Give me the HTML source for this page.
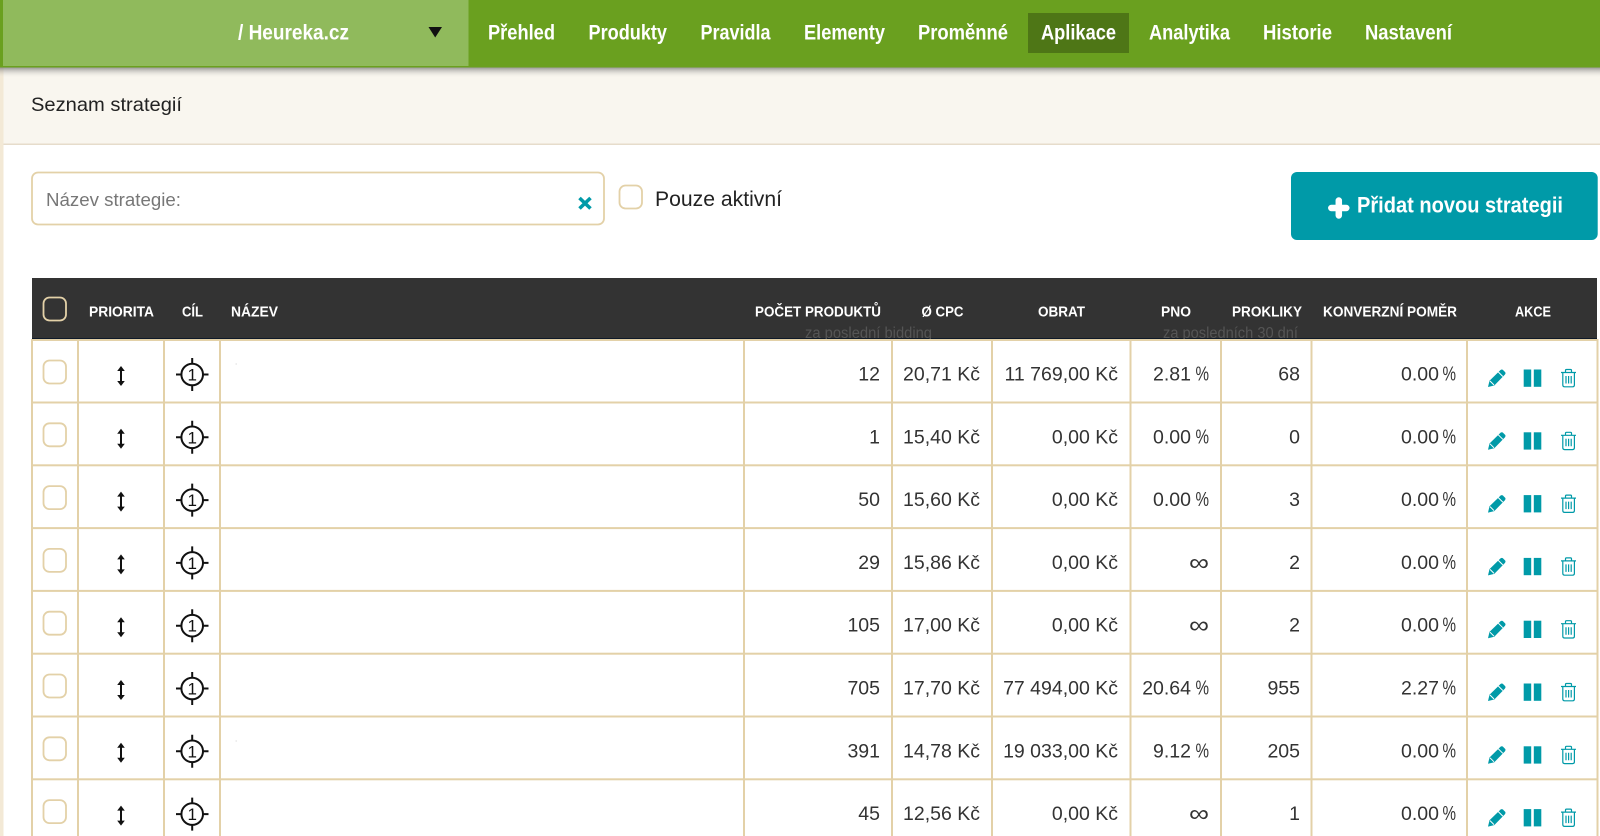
<!DOCTYPE html>
<html lang="cs">
<head>
<meta charset="utf-8">
<title>Seznam strategií</title>
<style>
html,body{margin:0;padding:0;width:1600px;height:836px;overflow:hidden;background:#fff}
svg{display:block}
text{font-family:"Liberation Sans",sans-serif}
.nav{font-size:21px;font-weight:700;fill:#fff}
.th{font-size:14.5px;font-weight:700;fill:#fff}
.sub{font-size:15.5px;fill:#555}
.n{font-size:19.5px;fill:#333;text-anchor:end}
.p{font-size:20.5px;fill:#333}
.one{font-size:17px;fill:#111;text-anchor:middle}
.inf{font-size:24px;fill:#333}
</style>
</head>
<body>
<svg xmlns="http://www.w3.org/2000/svg" width="1600" height="836" viewBox="0 0 1600 836">
<defs>
<linearGradient id="sh" x1="0" y1="0" x2="0" y2="1">
<stop offset="0" stop-color="#6e6e6e" stop-opacity=".75"/>
<stop offset="1" stop-color="#f9f6ef" stop-opacity="0"/>
</linearGradient>
<g id="rowi">
<rect x="43.500" y="21" width="22.500" height="23" rx="6" fill="#fff" stroke="#e3d1a8" stroke-width="1.800"/>
<path d="M121 29v15" stroke="#111" stroke-width="2" fill="none"/>
<path d="M117.200 31.500L121 26.500l3.800 5zM117.200 41.500L121 46.500l3.800-5z" fill="#111"/>
<circle cx="192.200" cy="35" r="10.800" fill="none" stroke="#111" stroke-width="2"/>
<path d="M192.200 18.500v5.500M192.200 46v5.500M176 35h5.500M203 35h5.500" stroke="#111" stroke-width="2" fill="none"/>
<path d="M1488 47.500l1.500-6.300L1500.500 30.500q1.500-1 2.500 0l2 2q1 1 0 2.500L1494.300 46z" fill="#009aa8"/>
<path d="M1498.300 32.500l4.500 4.500M1490 41.500l4 4" stroke="#fff" stroke-width="1" fill="none"/>
<rect x="1523.700" y="30" width="7.500" height="17.300" fill="#009aa8"/>
<rect x="1533.800" y="30" width="7.500" height="17.300" fill="#009aa8"/>
<g fill="none" stroke="#009aa8" stroke-width="1.200">
<path d="M1561 33h15M1565.500 33v-2q0-1 1-1h4q1 0 1 1v2"/>
<path d="M1562.800 33v12.500q0 1.800 1.800 1.800h8q1.800 0 1.800-1.800V33"/>
<path d="M1566 36.500v7.500M1568.600 36.500v7.500M1571.200 36.500v7.500"/>
</g>
</g>
</defs>

<!-- page -->
<rect width="1600" height="836" fill="#fff"/>
<rect x="0" y="67" width="3.500" height="769" fill="#f3e9d6"/>
<rect x="3.500" y="67" width="1596.500" height="77" fill="#f9f6ef"/>
<rect x="3.500" y="143.500" width="1596.500" height="1.500" fill="#e6dccb"/>
<rect x="0" y="67" width="1600" height="11" fill="url(#sh)"/>

<!-- top nav -->
<rect width="1600" height="67.500" fill="#6aa01f"/>
<rect x="3" y="0" width="465.500" height="66" fill="#90ba5c"/>
<rect x="1028" y="13" width="101" height="40" fill="#4e7616"/>
<text class="nav" x="238" y="39.500" textLength="111" lengthAdjust="spacingAndGlyphs">/ Heureka.cz</text>
<path d="M428.500 27H442L435.200 37.500z" fill="#111"/>
<text class="nav" x="488" y="39.500" textLength="67" lengthAdjust="spacingAndGlyphs">Přehled</text>
<text class="nav" x="588.500" y="39.500" textLength="78.500" lengthAdjust="spacingAndGlyphs">Produkty</text>
<text class="nav" x="700.500" y="39.500" textLength="70" lengthAdjust="spacingAndGlyphs">Pravidla</text>
<text class="nav" x="804" y="39.500" textLength="81" lengthAdjust="spacingAndGlyphs">Elementy</text>
<text class="nav" x="918" y="39.500" textLength="90" lengthAdjust="spacingAndGlyphs">Proměnné</text>
<text class="nav" x="1041" y="39.500" textLength="75" lengthAdjust="spacingAndGlyphs">Aplikace</text>
<text class="nav" x="1149" y="39.500" textLength="81" lengthAdjust="spacingAndGlyphs">Analytika</text>
<text class="nav" x="1263" y="39.500" textLength="69" lengthAdjust="spacingAndGlyphs">Historie</text>
<text class="nav" x="1365" y="39.500" textLength="87" lengthAdjust="spacingAndGlyphs">Nastavení</text>

<!-- sub header -->
<text x="31" y="111" font-size="19.500" fill="#222" textLength="151" lengthAdjust="spacingAndGlyphs">Seznam strategií</text>

<!-- filter row -->
<rect x="32" y="172.500" width="572" height="52" rx="6" fill="#fff" stroke="#e3d1a8" stroke-width="1.800"/>
<text x="46" y="206" font-size="18.500" fill="#777" textLength="135" lengthAdjust="spacingAndGlyphs">Název strategie:</text>
<path d="M579.500 198L590.500 208.500M590.500 198L579.500 208.500" stroke="#009aa8" stroke-width="3.600" fill="none"/>
<rect x="619.500" y="185.500" width="22.500" height="23" rx="6" fill="#fff" stroke="#e3d1a8" stroke-width="1.800"/>
<text x="655" y="206" font-size="21" fill="#222" textLength="127" lengthAdjust="spacingAndGlyphs">Pouze aktivní</text>

<rect x="1291" y="172" width="306.700" height="68" rx="6" fill="#009aa8"/>
<path d="M1338.800 200.500v15M1331.300 208h15" stroke="#fff" stroke-width="6.500" stroke-linecap="round" fill="none"/>
<text x="1357" y="212.700" font-size="22" font-weight="700" fill="#fff" textLength="206" lengthAdjust="spacingAndGlyphs">Přidat novou strategii</text>

<!-- table header -->
<rect x="32" y="278" width="1565" height="61" fill="#333"/>
<rect x="32" y="338" width="1565" height="1" fill="#0e1a2a"/>
<rect x="43.500" y="297.500" width="22.500" height="23" rx="6" fill="#333" stroke="#e3d1a8" stroke-width="1.800"/>
<text class="th" x="89" y="316.700" textLength="65" lengthAdjust="spacingAndGlyphs">PRIORITA</text>
<text class="th" x="182" y="316.700" textLength="21" lengthAdjust="spacingAndGlyphs">CÍL</text>
<text class="th" x="231" y="316.700" textLength="47" lengthAdjust="spacingAndGlyphs">NÁZEV</text>
<text class="th" x="755" y="316.700" textLength="126" lengthAdjust="spacingAndGlyphs">POČET PRODUKTŮ</text>
<text class="th" x="921.500" y="316.700" textLength="42" lengthAdjust="spacingAndGlyphs">Ø CPC</text>
<text class="th" x="1038" y="316.700" textLength="47" lengthAdjust="spacingAndGlyphs">OBRAT</text>
<text class="th" x="1161" y="316.700" textLength="30" lengthAdjust="spacingAndGlyphs">PNO</text>
<text class="th" x="1232" y="316.700" textLength="70" lengthAdjust="spacingAndGlyphs">PROKLIKY</text>
<text class="th" x="1323" y="316.700" textLength="134" lengthAdjust="spacingAndGlyphs">KONVERZNÍ POMĚR</text>
<text class="th" x="1515" y="316.700" textLength="36" lengthAdjust="spacingAndGlyphs">AKCE</text>
<text class="sub" x="805" y="338" textLength="127" lengthAdjust="spacingAndGlyphs">za poslední bidding</text>
<text class="sub" x="1163" y="338" textLength="135" lengthAdjust="spacingAndGlyphs">za posledních 30 dní</text>

<!-- table body background -->
<rect x="32" y="339" width="1565" height="497" fill="#fff"/>

<!-- grid -->
<g fill="#e3d1a8">
<rect x="31" y="339" width="2" height="497"/>
<rect x="77" y="339" width="2" height="497"/>
<rect x="163" y="339" width="2" height="497"/>
<rect x="219" y="339" width="2" height="497"/>
<rect x="743" y="339" width="2" height="497"/>
<rect x="891" y="339" width="2" height="497"/>
<rect x="991" y="339" width="2" height="497"/>
<rect x="1129.500" y="339" width="2" height="497"/>
<rect x="1220" y="339" width="2" height="497"/>
<rect x="1310.500" y="339" width="2" height="497"/>
<rect x="1466" y="339" width="2" height="497"/>
<rect x="1596.500" y="339" width="2" height="497"/>
<rect x="31" y="339" width="1567" height="2"/>
<rect x="31" y="401.500" width="1567" height="2"/>
<rect x="31" y="464.300" width="1567" height="2"/>
<rect x="31" y="527.100" width="1567" height="2"/>
<rect x="31" y="589.900" width="1567" height="2"/>
<rect x="31" y="652.700" width="1567" height="2"/>
<rect x="31" y="715.500" width="1567" height="2"/>
<rect x="31" y="778.300" width="1567" height="2"/>
</g>
<rect x="235.500" y="363.500" width="1.500" height="1" fill="#ddd"/>
<rect x="235.500" y="740.500" width="1.500" height="1" fill="#ddd"/>

<!-- rows -->
<g transform="translate(0,339.500)">
<use href="#rowi"/><text class="one" x="192.200" y="41">1</text>
<text class="n" x="880" y="41">12</text><text class="n" x="980" y="41">20,71 Kč</text><text class="n" x="1118" y="41">11 769,00 Kč</text>
<text class="n" x="1191" y="41">2.81</text><text class="p" x="1195.500" y="41" textLength="13.500" lengthAdjust="spacingAndGlyphs">%</text>
<text class="n" x="1300" y="41">68</text>
<text class="n" x="1439" y="41">0.00</text><text class="p" x="1442.500" y="41" textLength="13.500" lengthAdjust="spacingAndGlyphs">%</text>
</g>
<g transform="translate(0,402.300)">
<use href="#rowi"/><text class="one" x="192.200" y="41">1</text>
<text class="n" x="880" y="41">1</text><text class="n" x="980" y="41">15,40 Kč</text><text class="n" x="1118" y="41">0,00 Kč</text>
<text class="n" x="1191" y="41">0.00</text><text class="p" x="1195.500" y="41" textLength="13.500" lengthAdjust="spacingAndGlyphs">%</text>
<text class="n" x="1300" y="41">0</text>
<text class="n" x="1439" y="41">0.00</text><text class="p" x="1442.500" y="41" textLength="13.500" lengthAdjust="spacingAndGlyphs">%</text>
</g>
<g transform="translate(0,465.100)">
<use href="#rowi"/><text class="one" x="192.200" y="41">1</text>
<text class="n" x="880" y="41">50</text><text class="n" x="980" y="41">15,60 Kč</text><text class="n" x="1118" y="41">0,00 Kč</text>
<text class="n" x="1191" y="41">0.00</text><text class="p" x="1195.500" y="41" textLength="13.500" lengthAdjust="spacingAndGlyphs">%</text>
<text class="n" x="1300" y="41">3</text>
<text class="n" x="1439" y="41">0.00</text><text class="p" x="1442.500" y="41" textLength="13.500" lengthAdjust="spacingAndGlyphs">%</text>
</g>
<g transform="translate(0,527.900)">
<use href="#rowi"/><text class="one" x="192.200" y="41">1</text>
<text class="n" x="880" y="41">29</text><text class="n" x="980" y="41">15,86 Kč</text><text class="n" x="1118" y="41">0,00 Kč</text>
<text class="inf" x="1189" y="42.500" textLength="20" lengthAdjust="spacingAndGlyphs">∞</text>
<text class="n" x="1300" y="41">2</text>
<text class="n" x="1439" y="41">0.00</text><text class="p" x="1442.500" y="41" textLength="13.500" lengthAdjust="spacingAndGlyphs">%</text>
</g>
<g transform="translate(0,590.700)">
<use href="#rowi"/><text class="one" x="192.200" y="41">1</text>
<text class="n" x="880" y="41">105</text><text class="n" x="980" y="41">17,00 Kč</text><text class="n" x="1118" y="41">0,00 Kč</text>
<text class="inf" x="1189" y="42.500" textLength="20" lengthAdjust="spacingAndGlyphs">∞</text>
<text class="n" x="1300" y="41">2</text>
<text class="n" x="1439" y="41">0.00</text><text class="p" x="1442.500" y="41" textLength="13.500" lengthAdjust="spacingAndGlyphs">%</text>
</g>
<g transform="translate(0,653.500)">
<use href="#rowi"/><text class="one" x="192.200" y="41">1</text>
<text class="n" x="880" y="41">705</text><text class="n" x="980" y="41">17,70 Kč</text><text class="n" x="1118" y="41">77 494,00 Kč</text>
<text class="n" x="1191" y="41">20.64</text><text class="p" x="1195.500" y="41" textLength="13.500" lengthAdjust="spacingAndGlyphs">%</text>
<text class="n" x="1300" y="41">955</text>
<text class="n" x="1439" y="41">2.27</text><text class="p" x="1442.500" y="41" textLength="13.500" lengthAdjust="spacingAndGlyphs">%</text>
</g>
<g transform="translate(0,716.300)">
<use href="#rowi"/><text class="one" x="192.200" y="41">1</text>
<text class="n" x="880" y="41">391</text><text class="n" x="980" y="41">14,78 Kč</text><text class="n" x="1118" y="41">19 033,00 Kč</text>
<text class="n" x="1191" y="41">9.12</text><text class="p" x="1195.500" y="41" textLength="13.500" lengthAdjust="spacingAndGlyphs">%</text>
<text class="n" x="1300" y="41">205</text>
<text class="n" x="1439" y="41">0.00</text><text class="p" x="1442.500" y="41" textLength="13.500" lengthAdjust="spacingAndGlyphs">%</text>
</g>
<g transform="translate(0,779.100)">
<use href="#rowi"/><text class="one" x="192.200" y="41">1</text>
<text class="n" x="880" y="41">45</text><text class="n" x="980" y="41">12,56 Kč</text><text class="n" x="1118" y="41">0,00 Kč</text>
<text class="inf" x="1189" y="42.500" textLength="20" lengthAdjust="spacingAndGlyphs">∞</text>
<text class="n" x="1300" y="41">1</text>
<text class="n" x="1439" y="41">0.00</text><text class="p" x="1442.500" y="41" textLength="13.500" lengthAdjust="spacingAndGlyphs">%</text>
</g>
</svg>
</body>
</html>
